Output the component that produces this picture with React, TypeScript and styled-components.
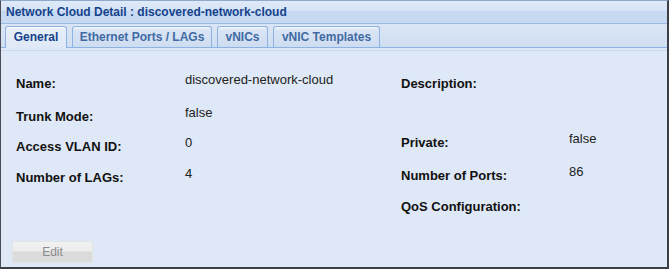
import React from "react";
import styled, { createGlobalStyle } from "styled-components";

const Global = createGlobalStyle`
  html, body { margin: 0; padding: 0; background: #ffffff; }
  body { font-family: "Liberation Sans", Arial, sans-serif; font-size: 12px; }
`;

const Frame = styled.div`
  width: 669px;
  height: 269px;
  box-sizing: border-box;
  border-left: 1px solid #4a4d55;
  border-right: 2px solid #3c3f46;
  border-bottom: 2px solid #3c3f46;
  border-top: 1px solid #8fa9cc;
  display: flex;
  flex-direction: column;
  background: #dfe8f6;
`;

const Header = styled.div`
  height: 23px;
  box-sizing: border-box;
  padding: 4px 0 0 5px;
  background: linear-gradient(to bottom, #dfeaf8 0%, #d6e4f6 42%, #c6d9f2 48%, #c9dbf2 100%);
  border-bottom: 1px solid #99bbe8;
  color: #15428b;
  font-weight: bold;
  font-size: 12px;
  line-height: 14px;
`;

const TabStrip = styled.div`
  height: 24px;
  box-sizing: border-box;
  display: flex;
  align-items: flex-end;
  gap: 5px;
  padding-left: 4px;
  background: linear-gradient(to bottom, #dbe6f5, #cfdef1);
  border-bottom: 1px solid #8db2e3;
`;

const Tab = styled.div<{ $active?: boolean; $w: number }>`
  width: ${(p) => p.$w}px;
  height: ${(p) => (p.$active ? "22px" : "21px")};
  box-sizing: border-box;
  text-align: center;
  border: 1px solid #8db2e3;
  border-bottom: none;
  border-radius: 3px 3px 0 0;
  margin-bottom: ${(p) => (p.$active ? "-1px" : "0")};
  background: ${(p) =>
    p.$active
      ? "linear-gradient(to bottom, #ffffff 0, #e6eef9 2px, #dfe8f6 100%)"
      : "linear-gradient(to bottom, #f2f6fc 0, #d9e5f5 3px, #cedcf0 100%)"};
  color: ${(p) => (p.$active ? "#15428b" : "#416aa3")};
  font-weight: bold;
  font-size: 12px;
  line-height: ${(p) => (p.$active ? "21px" : "20px")};
  white-space: nowrap;
`;

const Under = styled.div`
  height: 2px;
  background: #dfe8f6;
  border-bottom: 1px solid #c9d9ef;
`;

const Body = styled.div`
  flex: 1;
  display: grid;
  grid-template-columns: 385px 1fr;
  padding: 20px 0 0 15px;
`;

const Column = styled.div`
  display: flex;
  flex-direction: column;
`;

const Row = styled.div<{ $valueX: number; $h: number }>`
  height: ${(p) => p.$h}px;
  display: grid;
  grid-template-columns: ${(p) => p.$valueX}px 1fr;
`;

const Label = styled.div`
  font-weight: bold;
  color: #111111;
  font-size: 13px;
  line-height: 15px;
  padding-top: 5px;
`;

const Value = styled.div`
  color: #222222;
  font-size: 13px;
  line-height: 15px;
  padding-top: 1px;
`;

const Footer = styled.div`
  height: 26px;
  padding-left: 11px;
`;

const EditButton = styled.button`
  width: 81px;
  height: 22px;
  border: 1px solid #e4e4e4;
  border-radius: 2px;
  background: linear-gradient(to bottom, #f2f2f2 0, #ececec 45%, #dadada 50%, #dcdcdc 100%);
  color: #8c8c8c;
  font-family: "Liberation Sans", Arial, sans-serif;
  font-size: 12px;
  padding: 0;
  cursor: default;
`;

type Field = { label: string; value?: string; h: number };

const left: Field[] = [
  { label: "Name:", value: "discovered-network-cloud", h: 33 },
  { label: "Trunk Mode:", value: "false", h: 30 },
  { label: "Access VLAN ID:", value: "0", h: 31 },
  { label: "Number of LAGs:", value: "4", h: 31 },
];

const right: Field[] = [
  { label: "Description:", h: 59 },
  { label: "Private:", value: "false", h: 33 },
  { label: "Number of Ports:", value: "86", h: 31 },
  { label: "QoS Configuration:", h: 31 },
];

const tabs = [
  { name: "General", w: 62 },
  { name: "Ethernet Ports / LAGs", w: 140 },
  { name: "vNICs", w: 51 },
  { name: "vNIC Templates", w: 107 },
];

export default function App() {
  return (
    <>
      <Global />
      <Frame>
        <Header>Network Cloud Detail : discovered-network-cloud</Header>
        <TabStrip>
          {tabs.map((t, i) => (
            <Tab key={t.name} $active={i === 0} $w={t.w}>
              {t.name}
            </Tab>
          ))}
        </TabStrip>
        <Under />
        <Body>
          <Column>
            {left.map((f) => (
              <Row key={f.label} $valueX={169} $h={f.h}>
                <Label>{f.label}</Label>
                <Value>{f.value}</Value>
              </Row>
            ))}
          </Column>
          <Column>
            {right.map((f) => (
              <Row key={f.label} $valueX={168} $h={f.h}>
                <Label>{f.label}</Label>
                <Value>{f.value}</Value>
              </Row>
            ))}
          </Column>
        </Body>
        <Footer>
          <EditButton disabled>Edit</EditButton>
        </Footer>
      </Frame>
    </>
  );
}
